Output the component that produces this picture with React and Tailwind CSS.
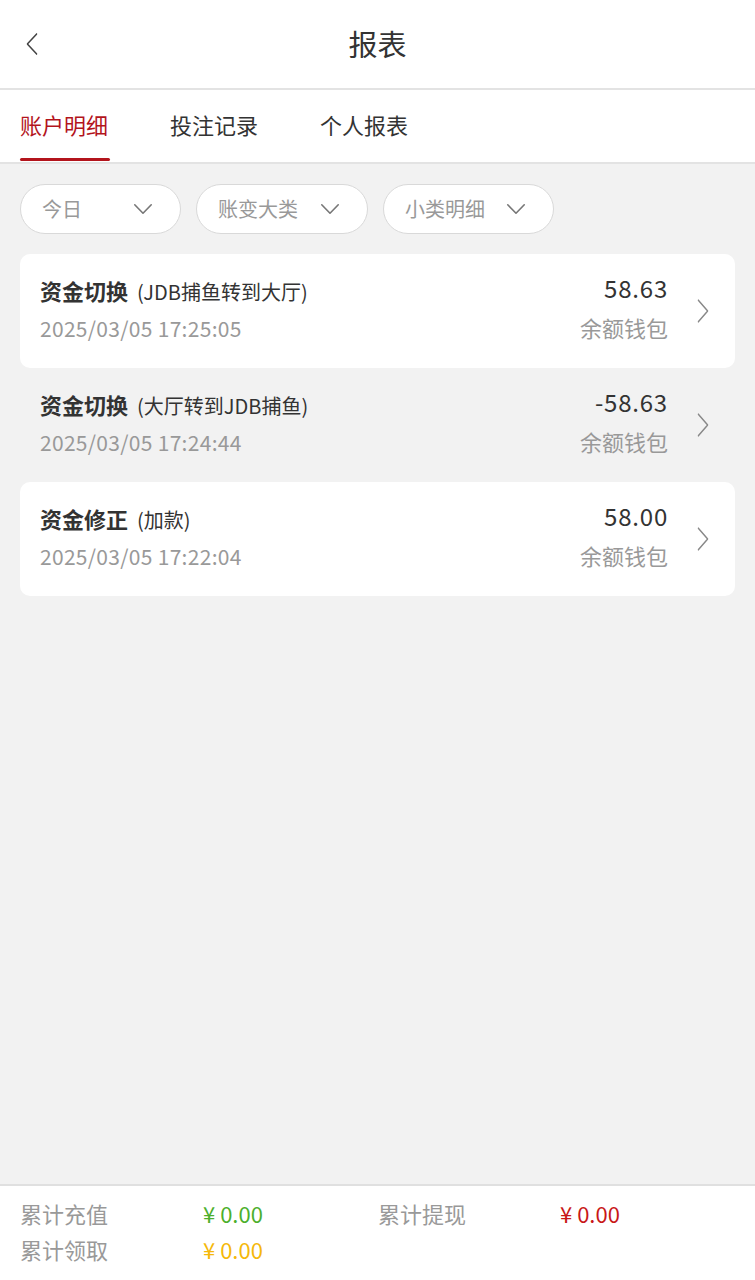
import React from 'react';

const font = { fontFamily: '"Noto Sans CJK SC", "Noto Sans", sans-serif' };

const records = [
    { title: '资金切换', note: '(JDB捕鱼转到大厅)', time: '2025/03/05 17:25:05', amount: '58.63', card: true },
    { title: '资金切换', note: '(大厅转到JDB捕鱼)', time: '2025/03/05 17:24:44', amount: '-58.63', card: false },
    { title: '资金修正', note: '(加款)', time: '2025/03/05 17:22:04', amount: '58.00', card: true },
];

const Chevron = ({ dir = 'right', className = '' }) => (
    <svg viewBox="0 0 24 24" className={className} fill="none" stroke="currentColor" strokeWidth="1.7" strokeLinecap="round" strokeLinejoin="round" preserveAspectRatio="none">
        {dir === 'right' && <path d="M5 2l14 10-14 10" />}
        {dir === 'left' && <path d="M19 2L5 12l14 10" />}
        {dir === 'down' && <path d="M3 7l9 10 9-10" />}
    </svg>
);

const App = () => {
    return (
        <div className="min-h-[1280px] flex flex-col bg-[#f2f2f2] text-[#333]" style={font}>
            {/* top bar */}
            <div className="h-[90px] bg-white flex items-center relative border-b-2 border-[#e3e3e3]">
                <Chevron dir="left" className="absolute left-[24px] top-[32px] w-[16px] h-[24px] text-[#444]" />
                <h1 className="w-full text-center text-[29px] leading-none text-[#333] mb-[2px]">报表</h1>
            </div>

            {/* tabs */}
            <div className="h-[74px] bg-white flex items-stretch pl-[20px] gap-[62px] border-b-2 border-[#e3e3e3]">
                <div className="relative flex items-center text-[22px] text-[#b3141c] pb-[3px]">
                    账户明细
                    <div className="absolute left-0 right-[-2px] bottom-[1px] h-[3px] bg-[#b3141c] rounded-full"></div>
                </div>
                <div className="flex items-center text-[22px] text-[#333] pb-[3px]">投注记录</div>
                <div className="flex items-center text-[22px] text-[#333] pb-[3px]">个人报表</div>
            </div>

            {/* filters */}
            <div className="flex gap-[15px] px-[20px] pt-[20px] pb-[20px]">
                {[
                    { label: '今日', w: 'w-[161px]' },
                    { label: '账变大类', w: 'w-[172px]' },
                    { label: '小类明细', w: 'w-[171px]' },
                ].map((f) => (
                    <div key={f.label} className={`${f.w} h-[50px] bg-white border border-[#d9d9d9] rounded-full flex items-center justify-between pl-[21px] pr-[26px]`}>
                        <span className="text-[20px] text-[#999]">{f.label}</span>
                        <Chevron dir="down" className="w-[22px] h-[20px] text-[#777]" />
                    </div>
                ))}
            </div>

            {/* records */}
            <div className="flex flex-col px-[20px]">
                {records.map((r, i) => (
                    <div key={i} className={`h-[114px] rounded-[10px] flex items-center pl-[20px] pr-[24px] ${r.card ? 'bg-white' : ''}`}>
                        <div className="flex-1 flex flex-col gap-[16px] mb-[4px]">
                            <div className="flex items-baseline leading-none">
                                <span className="text-[22px] font-bold text-[#333]">{r.title}</span>
                                <span className="text-[20px] text-[#333] ml-[9px]">{r.note}</span>
                            </div>
                            <span className="text-[21px] text-[#999] leading-none tracking-[0.3px]">{r.time}</span>
                        </div>
                        <div className="flex flex-col items-end gap-[16px] mb-[8px]">
                            <span className="text-[24px] text-[#333] leading-none tracking-[0.8px]">{r.amount}</span>
                            <span className="text-[22px] text-[#999] leading-none">余额钱包</span>
                        </div>
                        <Chevron dir="right" className="w-[16px] h-[26px] text-[#888] ml-[27px]" />
                    </div>
                ))}
            </div>

            <div className="flex-1"></div>

            {/* summary footer */}
            <div className="bg-white border-t-2 border-[#e0e0e0] h-[96px] pl-[20px] pt-[9px] text-[22px] leading-[36px]">
                <div className="flex">
                    <span className="w-[183px] text-[#999]">累计充值</span>
                    <span className="w-[175px] text-[#4caf2c]">¥ 0.00</span>
                    <span className="w-[182px] text-[#999]">累计提现</span>
                    <span className="text-[#c81717]">¥ 0.00</span>
                </div>
                <div className="flex">
                    <span className="w-[183px] text-[#999]">累计领取</span>
                    <span className="text-[#f5b80a]">¥ 0.00</span>
                </div>
            </div>
        </div>
    );
};

export default App;
